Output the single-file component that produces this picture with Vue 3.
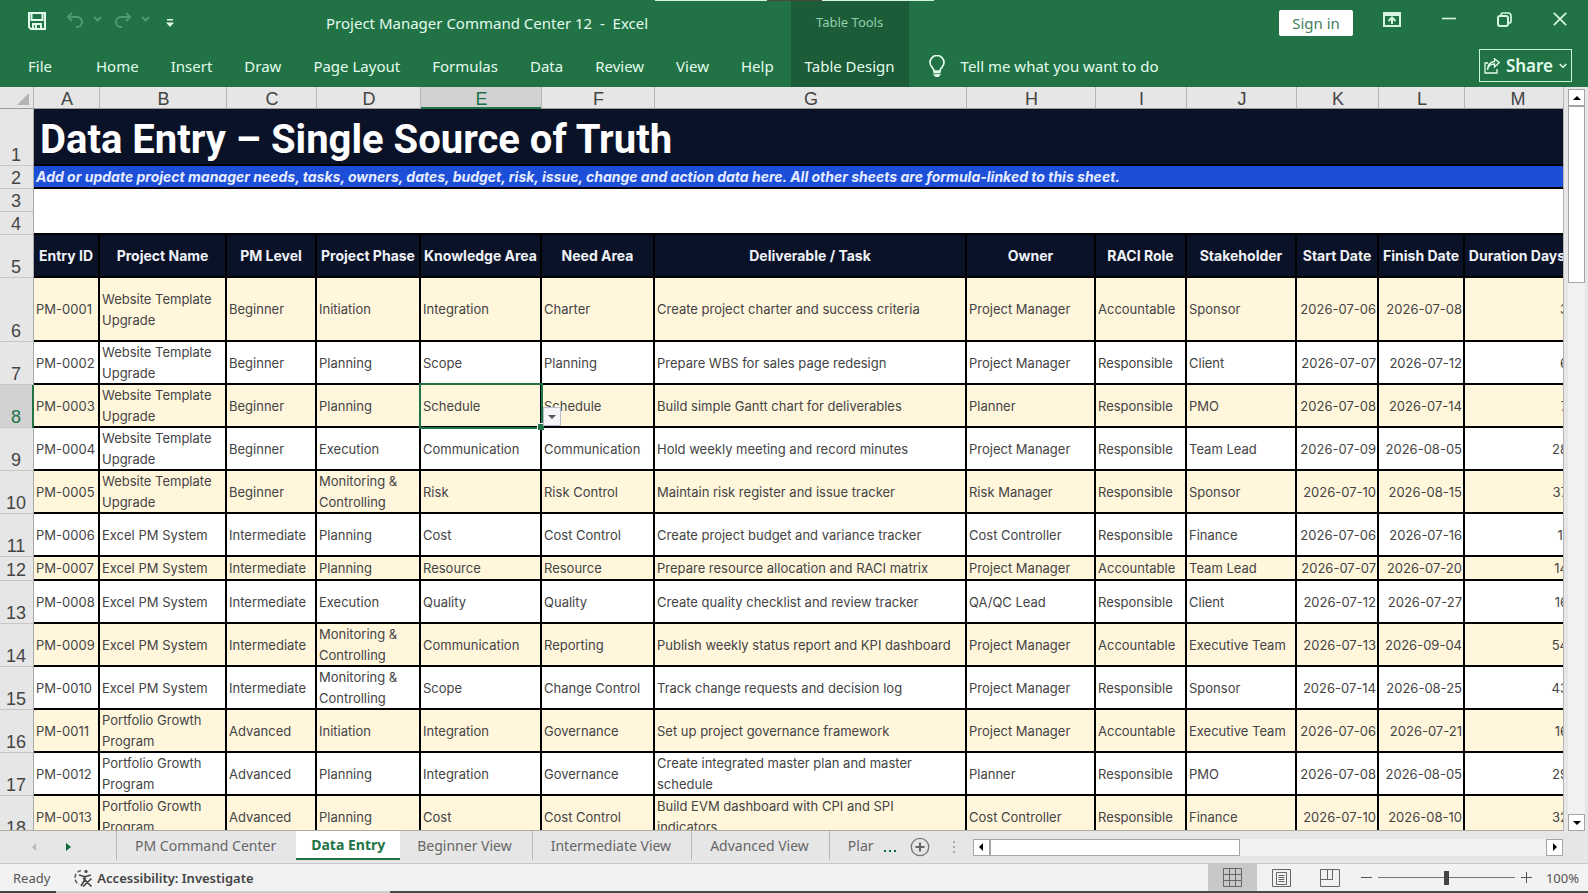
<template>
  <div class="window">
    <!-- ribbon -->
    <header class="ribbon">
      <div class="edge"><i></i><i></i><i></i></div>
      <div class="ribbon-main">
        <div class="title-row">
          <button class="icon-btn save" aria-label="Save">
            <svg width="18" height="18" viewBox="0 0 18 18"><path d="M1 1h16v16H3l-2-2z M3.5 1v7h11V1 M5 17v-5h8v5 M8 13v4" fill="none" stroke="#e3fbec" stroke-width="2" /></svg>
          </button>
          <button class="icon-btn undo" aria-label="Undo" disabled>
            <svg width="36" height="18" viewBox="0 0 36 18"><path d="M6 2L2 6l4 4 M2 6h9a5 5 0 0 1 0 10h-1 M28 6l3.500 3.500L35 6" fill="none" stroke="#4f9a70" stroke-width="2" /></svg>
          </button>
          <button class="icon-btn redo" aria-label="Redo" disabled>
            <svg width="36" height="18" viewBox="0 0 36 18"><path d="M12 2l4 4-4 4 M16 6H7a5 5 0 0 0 0 10h1 M28 6l3.500 3.500L35 6" fill="none" stroke="#4f9a70" stroke-width="2" /></svg>
          </button>
          <button class="icon-btn customize" aria-label="Customize Quick Access Toolbar">
            <svg width="8" height="8" viewBox="0 0 8 8"><path d="M1 0h6v1.500H1z M0 3.500h8L4 8z" fill="#e3fbec" /></svg>
          </button>
          <h1 class="doc-title">Project Manager Command Center 12 &nbsp;-&nbsp; Excel</h1>
        </div>
        <nav class="menu">
          <button v-for="item in menu" :key="item">{{ item }}</button>
        </nav>
      </div>
      <div class="context">
        <span class="context-name">Table Tools</span>
        <button>Table Design</button>
      </div>
      <div class="ribbon-side">
        <div class="window-row">
          <button class="sign-in">Sign in</button>
          <button class="icon-btn" aria-label="Ribbon Display Options">
            <svg width="18" height="15" viewBox="0 0 18 15"><path d="M1 1h16v13H1z M1 3h16 M9 12V6 M5.500 9L9 5.500 12.500 9" fill="none" stroke="#d5f5e1" stroke-width="2" /></svg>
          </button>
          <button class="icon-btn" aria-label="Minimize">
            <svg width="14" height="14" viewBox="0 0 14 14"><path d="M0 6.500h14" stroke="#d5f5e1" stroke-width="1.600" /></svg>
          </button>
          <button class="icon-btn" aria-label="Restore">
            <svg width="15" height="15" viewBox="0 0 15 15"><rect x="1" y="4" width="10" height="10" rx="2" fill="none" stroke="#d5f5e1" stroke-width="2" /><path d="M4 3c0-1 1-2 2-2h5a3 3 0 0 1 3 3v5c0 1-1 2-2 2" fill="none" stroke="#d5f5e1" stroke-width="1.700" /></svg>
          </button>
          <button class="icon-btn" aria-label="Close">
            <svg width="14" height="14" viewBox="0 0 14 14"><path d="M.8.8l12.400 12.400M13.200.8L.8 13.200" stroke="#d5f5e1" stroke-width="1.700" /></svg>
          </button>
        </div>
        <div class="search-row">
          <button class="tell-me">
            <svg width="16" height="22" viewBox="0 0 16 22"><path d="M5 16c0-3-4-4-4-8.500a7 7 0 0 1 14 0C15 12 11 13 11 16z" fill="none" stroke="#e3fbec" stroke-width="1.700" /><path d="M4.500 16h7v4l-2 2h-3l-2-2z" fill="#e3fbec" /><path d="M4.500 18.700h7" stroke="#217346" stroke-width=".8" /></svg>
            <span>Tell me what you want to do</span>
          </button>
          <button class="share">
            <svg width="16" height="16" viewBox="0 0 16 16"><path d="M4 5H1v10h12v-4 M3.500 12c.5-4 3-6 7-6V9l4.700-4.500L10.500.8V3.500c-4.500.5-7 4-7 8.500z" fill="none" stroke="#e3fbec" stroke-width="1.300" /></svg>
            <span>Share</span>
            <svg width="8" height="6" viewBox="0 0 8 6"><path d="M.7 1L4 4.300 7.300 1" fill="none" stroke="#e3fbec" stroke-width="1.500" /></svg>
          </button>
        </div>
      </div>
    </header>

    <!-- worksheet -->
    <main class="sheet-area">
      <div class="sheet">
        <table :style="{ width: tableWidth + 'px' }">
          <colgroup>
            <col :style="{ width: gutter + 'px' }">
            <col v-for="col in columns" :key="col.letter" :style="{ width: col.width + 'px' }">
          </colgroup>
          <thead>
            <tr class="letters">
              <th class="corner"><svg width="12" height="12" viewBox="0 0 12 12"><path d="M12 0v12H0z" fill="#b4b4b4" /></svg></th>
              <th v-for="col in columns" :key="col.letter" scope="col" :class="{ current: col.letter === 'E' }">{{ col.letter }}</th>
            </tr>
          </thead>
          <tbody>
            <tr class="banner">
              <th class="num" scope="row">1</th>
              <td :colspan="columns.length">Data Entry – Single Source of Truth</td>
            </tr>
            <tr class="note">
              <th class="num" scope="row">2</th>
              <td :colspan="columns.length">Add or update project manager needs, tasks, owners, dates, budget, risk, issue, change and action data here. All other sheets are formula-linked to this sheet.</td>
            </tr>
            <tr class="blank">
              <th class="num" scope="row">3</th>
              <td :colspan="columns.length"></td>
            </tr>
            <tr class="blank last">
              <th class="num" scope="row">4</th>
              <td :colspan="columns.length"></td>
            </tr>
            <tr class="headings">
              <th class="num" scope="row">5</th>
              <th v-for="col in columns" :key="col.letter" scope="col" class="heading">{{ col.title }}</th>
            </tr>
            <tr v-for="(row, r) in rows" :key="row[0]" class="entry" :class="[{ band: r % 2 === 0 }, rowSize(r)]">
              <th class="num" scope="row" :class="{ current: r + 6 === 8 }">{{ r + 6 }}</th>
              <td v-for="(cell, c) in row" :key="c" :class="{ right: c > 9, active: isActive(r, c) }">
                {{ cell }}
                <span v-if="isActive(r, c)" class="selection"></span>
                <button v-if="isActive(r, c)" class="pick" aria-label="Pick from list">
                  <svg width="8" height="4" viewBox="0 0 8 4"><path d="M0 0h8L4 4z" fill="#555" /></svg>
                </button>
              </td>
            </tr>
          </tbody>
        </table>
      </div>
      <div class="vscroll">
        <button aria-label="Scroll up"><svg width="8" height="4" viewBox="0 0 8 4"><path d="M0 4h8L4 0z" /></svg></button>
        <div class="track"><div class="thumb"></div></div>
        <button aria-label="Scroll down"><svg width="8" height="4" viewBox="0 0 8 4"><path d="M0 0h8L4 4z" /></svg></button>
      </div>
    </main>

    <!-- sheet tabs -->
    <div class="tab-bar">
      <div class="tab-nav">
        <button aria-label="Previous sheet" disabled><svg width="4" height="8" viewBox="0 0 4 8"><path d="M4 0v8L0 4z" fill="#b9b9b9" /></svg></button>
        <button aria-label="Next sheet"><svg width="5" height="8" viewBox="0 0 5 8"><path d="M0 0v8l5-4z" fill="#0c6b3a" /></svg></button>
      </div>
      <nav class="tabs">
        <button v-for="tab in tabs" :key="tab" :class="{ selected: tab === 'Data Entry' }">{{ tab }}</button>
        <button class="cut">Plar</button>
      </nav>
      <button class="more" aria-label="More sheets"><i></i><i></i><i></i></button>
      <button class="add" aria-label="New sheet">
        <svg width="20" height="20" viewBox="0 0 20 20"><circle cx="10" cy="10" r="8.700" fill="none" stroke="#777" stroke-width="1.300" /><path d="M10 5.500v9M5.500 10h9" stroke="#666" stroke-width="2" /></svg>
      </button>
      <div class="grip"><i></i><i></i><i></i></div>
      <div class="hscroll">
        <button aria-label="Scroll left"><svg width="4" height="8" viewBox="0 0 4 8"><path d="M4 0v8L0 4z" /></svg></button>
        <div class="track"><div class="thumb"></div></div>
        <button aria-label="Scroll right"><svg width="4" height="8" viewBox="0 0 4 8"><path d="M0 0v8l4-4z" /></svg></button>
      </div>
    </div>

    <!-- status bar -->
    <footer class="status">
      <span class="ready">Ready</span>
      <button class="access">
        <svg width="20" height="18" viewBox="0 0 20 18"><path d="M8 1.500A7.500 7.500 0 0 0 6 15.500" fill="none" stroke="#555" stroke-width="1.500" stroke-dasharray="4 2" /><circle cx="13" cy="2.500" r="1.700" fill="#555" /><path d="M6 6l5 1.500h2L18 6 M12 7.500v3L8 17 M10 9l8.500 8.500 M18.500 9.500L10 17.500" fill="none" stroke="#444" stroke-width="1.600" /></svg>
        <span>Accessibility: Investigate</span>
      </button>
      <div class="views">
        <button class="on" aria-label="Normal">
          <svg width="19" height="19" viewBox="0 0 19 19"><path d="M.5.500h18v18H.5z M6.500 0v19 M12.500 0v19 M0 6.500h19 M0 12.500h19" fill="none" stroke="#666" /></svg>
        </button>
        <button aria-label="Page Layout">
          <svg width="19" height="18" viewBox="0 0 19 18"><path d="M.5.500h18v17H.5z M4.500 3.500h10v12h-10z M6.500 6.500h6 M6.500 8.500h6 M6.500 10.500h6 M6.500 12.500h6" fill="none" stroke="#666" /></svg>
        </button>
        <button aria-label="Page Break Preview">
          <svg width="20" height="18" viewBox="0 0 20 18"><path d="M.5.500h19v17H.5z M.5 10.500h12 M7.500 .5v10 M12.500 .5v10" fill="none" stroke="#666" /></svg>
        </button>
      </div>
      <div class="zoom">
        <button aria-label="Zoom out"><svg width="11" height="11" viewBox="0 0 11 11"><path d="M0 5.500h11" stroke="#555" /></svg></button>
        <input v-model="zoom" type="range" min="10" max="190" aria-label="Zoom">
        <button aria-label="Zoom in"><svg width="11" height="11" viewBox="0 0 11 11"><path d="M0 5.500h11M5.500 0v11" stroke="#555" /></svg></button>
        <span class="percent">{{ zoom }}%</span>
      </div>
    </footer>
    <div class="taskbar"></div>
  </div>
</template>

<script setup>
import { computed, ref } from 'vue'

const zoom = ref(100)
const gutter = 34

const menu = ['File', 'Home', 'Insert', 'Draw', 'Page Layout', 'Formulas', 'Data', 'Review', 'View', 'Help']
const tabs = ['PM Command Center', 'Data Entry', 'Beginner View', 'Intermediate View', 'Advanced View']

const columns = [
  { letter: 'A', width: 66, title: 'Entry ID' },
  { letter: 'B', width: 127, title: 'Project Name' },
  { letter: 'C', width: 90, title: 'PM Level' },
  { letter: 'D', width: 104, title: 'Project Phase' },
  { letter: 'E', width: 121, title: 'Knowledge Area' },
  { letter: 'F', width: 113, title: 'Need Area' },
  { letter: 'G', width: 312, title: 'Deliverable / Task' },
  { letter: 'H', width: 129, title: 'Owner' },
  { letter: 'I', width: 91, title: 'RACI Role' },
  { letter: 'J', width: 110, title: 'Stakeholder' },
  { letter: 'K', width: 82, title: 'Start Date' },
  { letter: 'L', width: 86, title: 'Finish Date' },
  { letter: 'M', width: 106, title: 'Duration Days' }
]

const web = 'Website Template\nUpgrade'
const portfolio = 'Portfolio Growth\nProgram'
const control = 'Monitoring &\nControlling'

const rows = [
  ['PM-0001', web, 'Beginner', 'Initiation', 'Integration', 'Charter', 'Create project charter and success criteria', 'Project Manager', 'Accountable', 'Sponsor', '2026-07-06', '2026-07-08', 3],
  ['PM-0002', web, 'Beginner', 'Planning', 'Scope', 'Planning', 'Prepare WBS for sales page redesign', 'Project Manager', 'Responsible', 'Client', '2026-07-07', '2026-07-12', 6],
  ['PM-0003', web, 'Beginner', 'Planning', 'Schedule', 'Schedule', 'Build simple Gantt chart for deliverables', 'Planner', 'Responsible', 'PMO', '2026-07-08', '2026-07-14', 7],
  ['PM-0004', web, 'Beginner', 'Execution', 'Communication', 'Communication', 'Hold weekly meeting and record minutes', 'Project Manager', 'Responsible', 'Team Lead', '2026-07-09', '2026-08-05', 28],
  ['PM-0005', web, 'Beginner', control, 'Risk', 'Risk Control', 'Maintain risk register and issue tracker', 'Risk Manager', 'Responsible', 'Sponsor', '2026-07-10', '2026-08-15', 37],
  ['PM-0006', 'Excel PM System', 'Intermediate', 'Planning', 'Cost', 'Cost Control', 'Create project budget and variance tracker', 'Cost Controller', 'Responsible', 'Finance', '2026-07-06', '2026-07-16', 11],
  ['PM-0007', 'Excel PM System', 'Intermediate', 'Planning', 'Resource', 'Resource', 'Prepare resource allocation and RACI matrix', 'Project Manager', 'Accountable', 'Team Lead', '2026-07-07', '2026-07-20', 14],
  ['PM-0008', 'Excel PM System', 'Intermediate', 'Execution', 'Quality', 'Quality', 'Create quality checklist and review tracker', 'QA/QC Lead', 'Responsible', 'Client', '2026-07-12', '2026-07-27', 16],
  ['PM-0009', 'Excel PM System', 'Intermediate', control, 'Communication', 'Reporting', 'Publish weekly status report and KPI dashboard', 'Project Manager', 'Accountable', 'Executive Team', '2026-07-13', '2026-09-04', 54],
  ['PM-0010', 'Excel PM System', 'Intermediate', control, 'Scope', 'Change Control', 'Track change requests and decision log', 'Project Manager', 'Responsible', 'Sponsor', '2026-07-14', '2026-08-25', 43],
  ['PM-0011', portfolio, 'Advanced', 'Initiation', 'Integration', 'Governance', 'Set up project governance framework', 'Project Manager', 'Accountable', 'Executive Team', '2026-07-06', '2026-07-21', 16],
  ['PM-0012', portfolio, 'Advanced', 'Planning', 'Integration', 'Governance', 'Create integrated master plan and master\nschedule', 'Planner', 'Responsible', 'PMO', '2026-07-08', '2026-08-05', 29],
  ['PM-0013', portfolio, 'Advanced', 'Planning', 'Cost', 'Cost Control', 'Build EVM dashboard with CPI and SPI\nindicators', 'Cost Controller', 'Responsible', 'Finance', '2026-07-10', '2026-08-10', 32]
]

const tableWidth = computed(() => columns.reduce((sum, col) => sum + col.width, gutter))

// selected cell is E8
function isActive(r, c) {
  return r === 2 && c === 4
}

function rowSize(r) {
  if (r === 0) return 'tall'
  if (r === 6) return 'short'
  return ''
}
</script>

<style>
body {
  margin: 0;
}
</style>

<style scoped>
* {
  box-sizing: border-box;
}

.window {
  display: flex;
  flex-direction: column;
  height: 100vh;
  overflow: hidden;
  background: #e6e6e6;
  font-family: "Noto Sans", "Open Sans", sans-serif;
  font-size: 15px;
}

button {
  display: flex;
  align-items: center;
  justify-content: center;
  border: 0;
  padding: 0;
  background: none;
  font: inherit;
  color: inherit;
  white-space: nowrap;
}

svg {
  display: block;
  flex: none;
}

/* ribbon */
.ribbon {
  position: relative;
  display: flex;
  flex: none;
  height: 87px;
  background: #217346;
  color: #e3fbec;
}

.edge {
  position: absolute;
  top: 0;
  left: 655px;
  display: flex;
}

.edge i {
  width: 112px;
  height: 1px;
  background: #d5f5e1;
}

.edge i:nth-child(2) {
  width: 55px;
  background: #4a4a35;
}

.ribbon-main {
  display: flex;
  flex-direction: column;
}

.title-row {
  display: flex;
  align-items: center;
  height: 46px;
  padding-left: 28px;
}

.save {
  margin-right: 20px;
  padding-bottom: 4px;
}

.undo,
.redo {
  margin-right: 12px;
  padding-bottom: 6px;
}

.customize {
  margin-left: 4px;
}

.doc-title {
  margin: 0 0 0 152px;
  font-size: 15px;
  font-weight: 400;
  white-space: nowrap;
}

.menu {
  display: flex;
  height: 41px;
  padding: 0 1px 2px 12px;
}

.menu button {
  padding: 0 16px;
}

.menu button:first-child {
  margin-right: 12px;
}

.context {
  display: flex;
  flex-direction: column;
  background: #1c5c38;
}

.context-name {
  height: 46px;
  line-height: 44px;
  font-size: 13px;
  text-align: center;
  color: #93cfab;
}

.context button {
  height: 41px;
  padding: 0 14px 2px;
}

.ribbon-side {
  display: flex;
  flex: 1;
  flex-direction: column;
}

.window-row {
  display: flex;
  align-items: center;
  justify-content: flex-end;
  gap: 41px;
  height: 46px;
  padding: 0 21px 8px 0;
}

.sign-in {
  width: 74px;
  height: 26px;
  margin: 8px -11px 0 0;
  border-radius: 2px;
  background: #fff;
  color: #3f7f5c;
}

.search-row {
  display: flex;
  align-items: center;
  justify-content: space-between;
  height: 41px;
  padding: 0 16px 2px 20px;
}

.tell-me {
  gap: 16px;
}

.share {
  gap: 6px;
  height: 33px;
  padding: 0 4px;
  border: 1px solid #c9f5da;
  font-size: 17px;
  font-weight: 600;
}

/* worksheet */
.sheet-area {
  display: flex;
  flex: 1;
  min-height: 0;
}

.sheet {
  flex: 1;
  min-width: 0;
  overflow: hidden;
  border-bottom: 1px solid #b0aca0;
}

table {
  table-layout: fixed;
  border-collapse: separate;
  border-spacing: 0;
  font-family: Inter, "Liberation Sans", sans-serif;
  font-size: 13px;
  line-height: 21px;
}

th,
td {
  padding: 0 3px 0 2px;
  white-space: nowrap;
}

.letters th {
  height: 22px;
  padding: 2px 0 0;
  box-shadow: inset -1px 0 #b5b5b5, inset 0 -1px #9b9b9b;
  background: #e6e6e6;
  font: 18px "Liberation Sans", sans-serif;
  line-height: 20px;
  color: #444;
}

.letters .current {
  box-shadow: inset -1px 0 #b5b5b5, inset 0 -2px #217346;
  background: #d2d2d2;
  color: #217346;
}

.corner svg {
  margin-left: 17px;
}

.num {
  padding: 0 2px 1px 0;
  box-shadow: inset -1px 0 #a8a8a8, inset 0 -1px #c6c6c6;
  background: #e6e6e6;
  font: 18px "Liberation Sans", sans-serif;
  line-height: 20px;
  vertical-align: bottom;
  color: #444;
}

.num.current {
  box-shadow: inset -2px 0 #217346, inset 0 -1px #c6c6c6;
  background: #d2d2d2;
  color: #217346;
}

.banner td {
  height: 57px;
  padding: 4px 6px 0;
  box-shadow: inset 0 -2px #000;
  background: #0a1228;
  font-family: Roboto, sans-serif;
  font-size: 40px;
  font-weight: 700;
  line-height: 48px;
  color: #fff;
}

.note td {
  height: 23px;
  padding-bottom: 2px;
  box-shadow: inset 0 -2px #000;
  background: #1d4ed8;
  font-size: 14px;
  font-style: italic;
  font-weight: 700;
  color: #e4ecff;
}

.blank td {
  height: 23px;
  background: #fff;
}

.blank.last td {
  box-shadow: inset 0 -2px #000;
}

.heading {
  height: 43px;
  padding: 0 2px 2px 0;
  box-shadow: inset -2px -2px #000;
  background: #0a1228;
  font-size: 14px;
  font-weight: 700;
  color: #f0f2f8;
}

.entry td {
  height: 43px;
  padding-bottom: 1px;
  box-shadow: inset -2px -2px #000;
  background: #fff;
  white-space: pre-line;
  color: #444;
}

.entry.tall td {
  height: 64px;
}

.entry.short td {
  height: 24px;
}

.entry.band td {
  background: #fff6dc;
}

.entry .right {
  text-align: right;
}

.entry .active {
  position: relative;
}

.selection {
  position: absolute;
  inset: -2px -1px -1px -2px;
  border: 2px solid #217346;
}

.selection::after {
  content: "";
  position: absolute;
  right: -3px;
  bottom: -3px;
  width: 6px;
  height: 6px;
  border: 1px solid #fff;
  border-width: 1px 0 0 1px;
  background: #217346;
}

.pick {
  position: absolute;
  right: -19px;
  bottom: 2px;
  z-index: 1;
  width: 18px;
  height: 19px;
  border: 1px solid #b8bccb;
  background: #f3f5fb;
}

/* scroll bars */
.vscroll {
  display: flex;
  flex: none;
  flex-direction: column;
  width: 25px;
  padding: 2px 4px 0;
  border-left: 1px solid #b5b5b5;
}

.vscroll button,
.hscroll button {
  flex: none;
  width: 17px;
  height: 17px;
  border: 1px solid #a5a5a5;
  background: #fff;
}

.track {
  flex: 1;
  background: #f1f1f1;
}

.thumb {
  border: 1px solid #a5a5a5;
  background: #fff;
}

.vscroll .track {
  width: 17px;
}

.vscroll .thumb {
  height: 25%;
}

.hscroll .thumb {
  width: 45%;
  height: 17px;
}

/* sheet tabs */
.tab-bar {
  display: flex;
  flex: none;
  align-items: center;
  height: 32px;
  padding-right: 25px;
  font-size: 14px;
  color: #666;
}

.tab-nav {
  display: flex;
  align-items: center;
  gap: 30px;
  width: 116px;
  padding-left: 32px;
}

.tabs {
  display: flex;
  align-self: flex-start;
}

.tabs button {
  height: 29px;
  padding: 0 20px 0 19px;
  box-shadow: inset 1px 0 #b5b5b5;
}

.tabs .selected {
  padding: 0 15px;
  border-bottom: 2px solid #217346;
  box-shadow: none;
  background: #fff;
  font-weight: 700;
  color: #217346;
}

.tabs .selected + button {
  padding-left: 17px;
  box-shadow: none;
}

.tabs .cut {
  padding-right: 10px;
}

.more {
  gap: 3px;
}

.more i {
  width: 2px;
  height: 2px;
  margin-top: 8px;
  background: #0c6b3a;
}

.add {
  margin-left: 14px;
}

.grip {
  display: flex;
  flex-direction: column;
  gap: 3px;
  margin: 0 18px 0 23px;
}

.grip i {
  width: 2px;
  height: 2px;
  background: #aaa;
}

.hscroll {
  display: flex;
  flex: 1;
}

/* status bar */
.status {
  display: flex;
  flex: none;
  align-items: center;
  height: 28px;
  padding: 0 9px 0 13px;
  border-top: 1px solid #c8c8c8;
  background: #f2f2f2;
  font-size: 13px;
  color: #555;
}

.access {
  gap: 4px;
  margin-left: 23px;
  font-weight: 600;
  color: #444;
}

.views {
  display: flex;
  align-self: stretch;
  margin-left: auto;
}

.views button {
  width: 49px;
}

.views .on {
  background: #c8c8c8;
}

.zoom {
  display: flex;
  align-items: center;
  margin-left: 6px;
}

.zoom input {
  appearance: none;
  width: 137px;
  height: 14px;
  margin: 0 6px;
  background: linear-gradient(#777, #777) center / 100% 1px no-repeat;
}

.zoom input::-webkit-slider-thumb {
  appearance: none;
  width: 5px;
  height: 14px;
  background: #444;
}

.percent {
  margin-left: 14px;
}

.taskbar {
  flex: none;
  height: 2px;
  background: linear-gradient(90deg, #444 56px, #ccc 56px, #ccc 390px, #4a4a48 390px);
}
</style>
